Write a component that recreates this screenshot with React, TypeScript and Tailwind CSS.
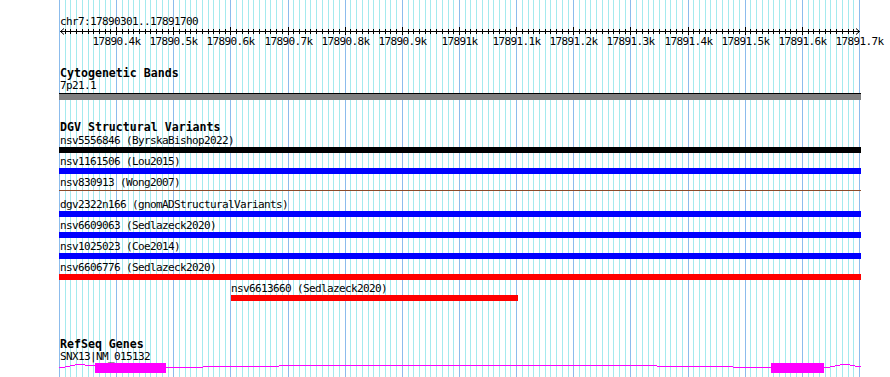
import React from "react";

// view: chr7:17890300..17891700 drawn over 800px starting at x=60
const START = 17890300;
const END = 17891700;
const PX = 800 / (END - START);
const toX = (bp: number) => 59.5 + (bp - START) * PX;

const gridlines = Array.from({ length: 141 }, (_, i) => ({
    x: Math.floor(59.5 + i * 10 * PX),
    major: i % 10 === 0,
}));

const tickLabels = Array.from({ length: 14 }, (_, i) => {
    const bp = 17890400 + i * 100;
    const k = bp / 1000;
    return { x: Math.floor(toX(bp)), text: `${k % 1 === 0 ? k.toFixed(0) : k.toFixed(1)}k` };
});

type Variant = { label: string; color: string; start: number; end: number; thin?: boolean };

const variants: Variant[] = [
    { label: "nsv5556846 (ByrskaBishop2022)", color: "#000000", start: 59, end: 861 },
    { label: "nsv1161506 (Lou2015)", color: "#0000ff", start: 59, end: 861 },
    { label: "nsv830913 (Wong2007)", color: "#8b4a2a", start: 59, end: 861, thin: true },
    { label: "dgv2322n166 (gnomADStructuralVariants)", color: "#0000ff", start: 59, end: 861 },
    { label: "nsv6609063 (Sedlazeck2020)", color: "#0000ff", start: 59, end: 861 },
    { label: "nsv1025023 (Coe2014)", color: "#0000ff", start: 59, end: 861 },
    { label: "nsv6606776 (Sedlazeck2020)", color: "#ff0000", start: 59, end: 861 },
    { label: "nsv6613660 (Sedlazeck2020)", color: "#ff0000", start: 231, end: 518 },
];

// intron line of SNX13 as horizontal runs [x1, x2, y]
const intron: [number, number, number][] = [
    [59, 65, 366], [65, 70, 365], [70, 75, 364], [75, 85, 363], [85, 95, 364],
    [166, 203, 366], [203, 279, 365], [279, 657, 364], [657, 733, 365], [733, 771, 366],
    [824, 830, 366], [830, 835, 365], [835, 840, 364], [840, 850, 363], [850, 855, 364], [855, 861, 365],
];

function Grid() {
    return (
        <svg className="absolute inset-0" width={890} height={377} shapeRendering="crispEdges">
            {gridlines.map((g, i) => (
                <rect key={i} x={g.x} y={0} width={1} height={377} fill={g.major ? "#8cbcec" : "#a4eaee"} />
            ))}
        </svg>
    );
}

function Ruler() {
    return (
        <svg width={890} height={9} shapeRendering="crispEdges" className="block">
            <rect x={60} y={4} width={800} height={1} fill="#000" />
            {gridlines.slice(1, -1).map((g, i) => (
                <rect key={i} x={g.x} y={g.major ? 0 : 2} width={1} height={g.major ? 8 : 5} fill="#000" />
            ))}
            <polyline points="64,1.5 60.5,4.5 64,7.5" fill="none" stroke="#000" strokeWidth={1} shapeRendering="auto" />
            <polyline points="856,1.5 859.5,4.5 856,7.5" fill="none" stroke="#000" strokeWidth={1} shapeRendering="auto" />
        </svg>
    );
}

function TrackTitle({ children }: { children: React.ReactNode }) {
    return <div className="pl-[60px] h-[13px] leading-[13px] text-[11.6px] font-bold whitespace-nowrap">{children}</div>;
}

function Label({ children, x = 60 }: { children: React.ReactNode; x?: number }) {
    return (
        <div className="h-[11px] leading-[11px] text-[11px] tracking-[-0.62px] whitespace-nowrap" style={{ paddingLeft: x }}>
            {children}
        </div>
    );
}

function VariantRow({ v }: { v: Variant }) {
    return (
        <div className="pb-[3px]">
            <Label x={v.start === 59 ? 60 : v.start}>{v.label}</Label>
            <div className="mt-[1px] h-[6px]">
                {v.thin ? (
                    <div className="mt-[2px] h-[1px]" style={{ marginLeft: v.start, width: v.end - v.start, background: v.color }} />
                ) : (
                    <div className="h-[6px]" style={{ marginLeft: v.start, width: v.end - v.start, background: v.color }} />
                )}
            </div>
        </div>
    );
}

export default function App() {
    return (
        <div
            className="relative w-[890px] h-[377px] overflow-hidden bg-white text-black"
            style={{ fontFamily: '"DejaVu Sans Mono", "Liberation Mono", monospace' }}
        >
            <Grid />
            <div className="relative pt-[16px]">
                <Label>chr7:17890301..17891700</Label>
                <Ruler />
                <div className="relative h-[11px] leading-[11px] text-[11px] tracking-[-0.62px]">
                    {tickLabels.map((t) => (
                        <span key={t.text} className="absolute top-0 -translate-x-1/2 whitespace-nowrap" style={{ left: t.x + 0.5 }}>
                            {t.text}
                        </span>
                    ))}
                </div>

                <div className="mt-[20px]">
                    <TrackTitle>Cytogenetic Bands</TrackTitle>
                    <Label>7p21.1</Label>
                    <div className="mt-[2px] ml-[59px] w-[802px] h-[7px] border-t border-black bg-[#808080]" />
                </div>

                <div className="mt-[21px]">
                    <TrackTitle>DGV Structural Variants</TrackTitle>
                    <div className="mt-[1px]">
                        {variants.map((v) => (
                            <VariantRow key={v.label} v={v} />
                        ))}
                    </div>
                </div>

                <div className="mt-[34px]">
                    <TrackTitle>RefSeq Genes</TrackTitle>
                    <Label>SNX13|NM_015132</Label>
                    <svg width={890} height={16} viewBox="0 361 890 16" className="block" shapeRendering="crispEdges">
                        {intron.map(([x1, x2, y], i) => (
                            <rect key={i} x={x1} y={y} width={x2 - x1} height={1} fill="#ff00ff" />
                        ))}
                        <rect x={95} y={362} width={71} height={10} fill="#ff00ff" />
                        <rect x={771} y={362} width={53} height={10} fill="#ff00ff" />
                    </svg>
                </div>
            </div>
        </div>
    );
}
